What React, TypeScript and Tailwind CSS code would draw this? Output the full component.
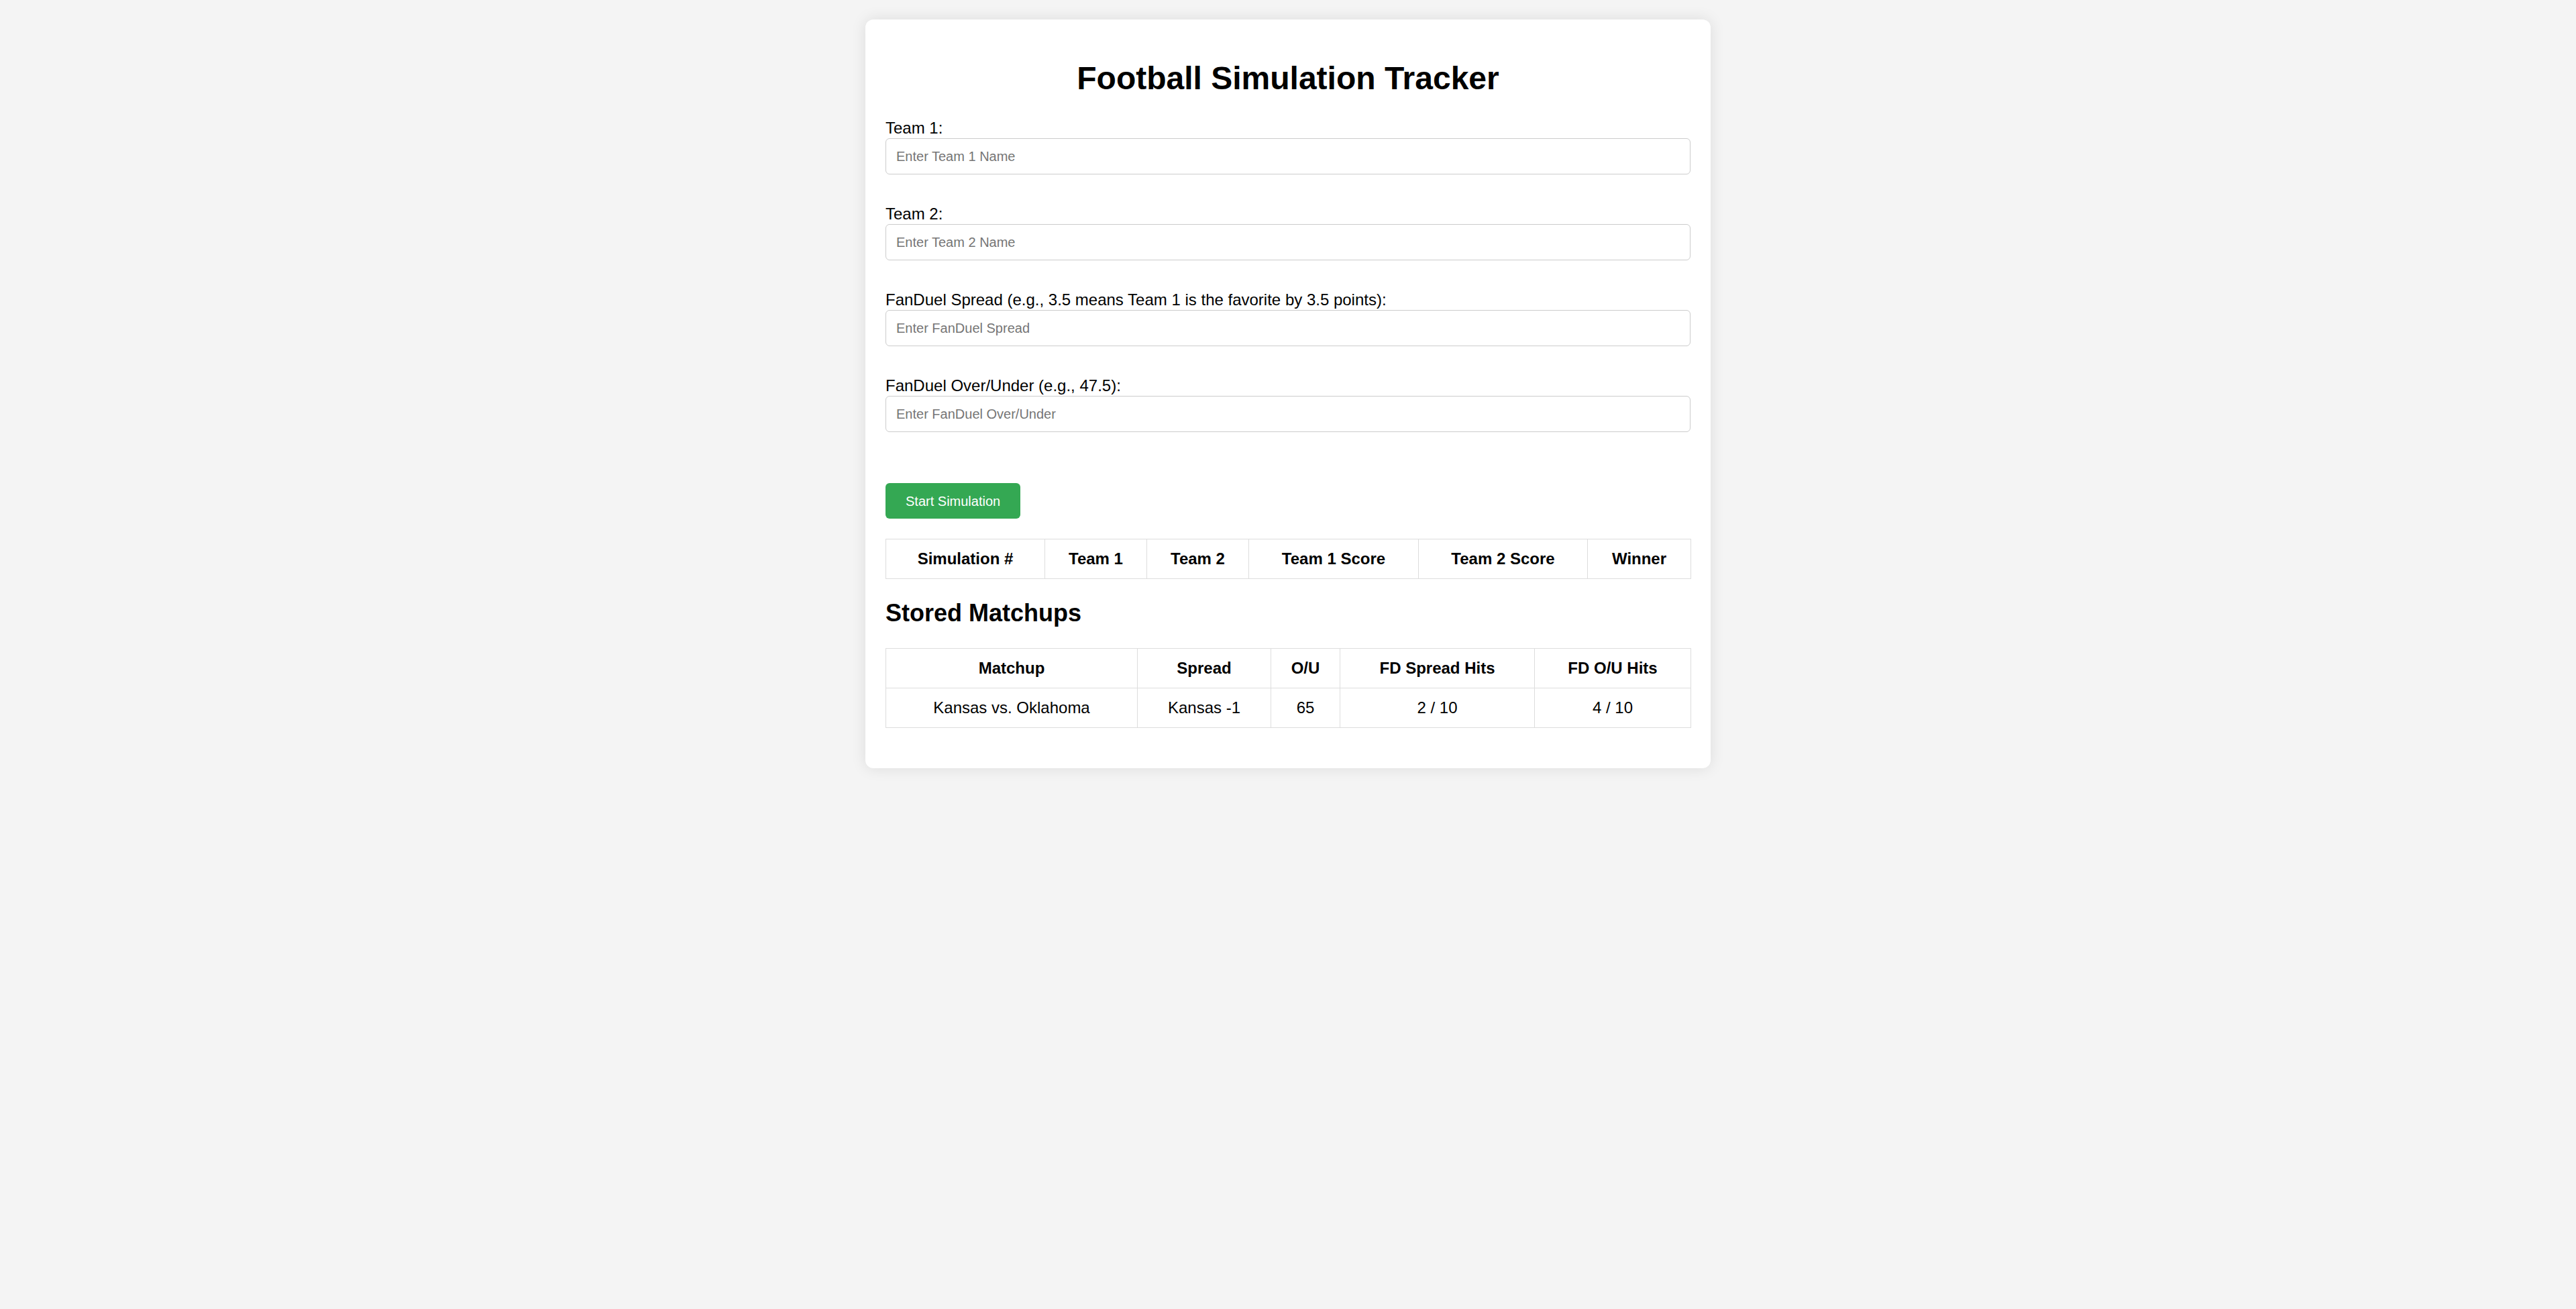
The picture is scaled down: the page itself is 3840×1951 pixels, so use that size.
import React from "react";

const font = { fontFamily: '"Liberation Sans", Arial, sans-serif' };

function Field({ label, placeholder }: { label: string; placeholder: string }) {
  return (
    <div>
      <label className="block text-[24px] leading-[28px] text-black">{label}</label>
      <input
        type="text"
        placeholder={placeholder}
        className="mt-[1px] block w-full h-[54px] border border-[#cccccc] rounded-[6px] px-[15px] text-[20px] text-black placeholder:text-[#757575] bg-white outline-none"
      />
    </div>
  );
}

export default function App() {
  const simHeaders = ["Simulation #", "Team 1", "Team 2", "Team 1 Score", "Team 2 Score", "Winner"];
  const simWidths = ["w-[237px]", "w-[152px]", "w-[152px]", "w-[253px]", "w-[252px]", "w-[154px]"];
  const storedHeaders = ["Matchup", "Spread", "O/U", "FD Spread Hits", "FD O/U Hits"];
  const storedWidths = ["w-[375px]", "w-[199px]", "w-[103px]", "w-[290px]", "w-[233px]"];
  const storedRow = ["Kansas vs. Oklahoma", "Kansas -1", "65", "2 / 10", "4 / 10"];

  return (
    <div className="min-h-screen bg-[#f4f4f4] pt-[29px]" style={font}>
      <div className="mx-auto w-[1260px] bg-white rounded-[12px] p-[30px] shadow-[0_0_22px_rgba(0,0,0,0.1)]">
        <h1 className="mt-[30px] mb-[33px] text-center text-[48px] leading-[55px] font-bold text-black">
          Football Simulation Tracker
        </h1>

        <div className="flex flex-col gap-[45px]">
          <Field label="Team 1:" placeholder="Enter Team 1 Name" />
          <Field label="Team 2:" placeholder="Enter Team 2 Name" />
          <Field
            label="FanDuel Spread (e.g., 3.5 means Team 1 is the favorite by 3.5 points):"
            placeholder="Enter FanDuel Spread"
          />
          <Field label="FanDuel Over/Under (e.g., 47.5):" placeholder="Enter FanDuel Over/Under" />
        </div>

        <button className="mt-[76px] block h-[53px] px-[30px] text-[20px] text-white bg-[#34a853] rounded-[6px]">
          Start Simulation
        </button>

        <table className="mt-[30px] w-full table-fixed border-collapse border border-[#dddddd]">
          <colgroup>
            {simWidths.map((w, i) => (
              <col key={i} className={w} />
            ))}
          </colgroup>
          <thead>
            <tr className="h-[59px]">
              {simHeaders.map((h) => (
                <th key={h} className="border border-[#dddddd] p-0 text-center text-[24px] font-bold text-black">
                  {h}
                </th>
              ))}
            </tr>
          </thead>
          <tbody></tbody>
        </table>

        <h2 className="mt-[30px] mb-[32px] text-[36px] leading-[41px] font-bold text-black">Stored Matchups</h2>

        <table className="w-full table-fixed border-collapse border border-[#dddddd]">
          <colgroup>
            {storedWidths.map((w, i) => (
              <col key={i} className={w} />
            ))}
          </colgroup>
          <thead>
            <tr className="h-[59px]">
              {storedHeaders.map((h) => (
                <th key={h} className="border border-[#dddddd] p-0 text-center text-[24px] font-bold text-black">
                  {h}
                </th>
              ))}
            </tr>
          </thead>
          <tbody>
            <tr className="h-[59px]">
              {storedRow.map((c, i) => (
                <td key={i} className="border border-[#dddddd] p-0 text-center text-[24px] text-black">
                  {c}
                </td>
              ))}
            </tr>
          </tbody>
        </table>
        <div className="h-[30px]" />
      </div>
    </div>
  );
}
